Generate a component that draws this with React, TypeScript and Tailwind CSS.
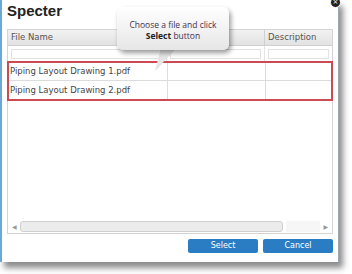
import React from 'react';

const rows = ['Piping Layout Drawing 1.pdf', 'Piping Layout Drawing 2.pdf'];

function Cols({ children, className = '' }: { children: React.ReactNode[]; className?: string }) {
  return (
    <div className={`grid grid-cols-[159px_98px_1fr] ${className}`}>
      {children}
    </div>
  );
}

export default function App() {
  return (
    <div className="relative w-[352px] h-[274px] bg-white overflow-hidden font-['DejaVu_Sans',sans-serif]">
      {/* Dialog */}
      <div className="w-[339px] h-[262px] bg-white border-l-2 border-[#6aa9d6] border-r border-r-[#9aa7ad] shadow-[4px_6px_6px_rgba(0,0,0,0.45)] flex flex-col px-[5px] pb-[8px]">
        <div className="h-[29px] pt-[2px] text-[15px] font-bold text-[#222] leading-[18px] font-['Liberation_Sans',sans-serif]">Specter</div>

        {/* Table */}
        <div className="h-[205px] border border-[#d4d4d4] flex flex-col text-[8.5px] text-[#444]">
          <Cols className="h-[16px] bg-gradient-to-b from-[#f2f2f2] to-[#e2e2e2] border-b border-[#d0d0d0] items-center text-[#555]">
            <div className="pl-[3px] border-r border-[#d0d0d0] h-full flex items-center">File Name</div>
            <div className="pl-[3px] border-r border-[#d0d0d0] h-full flex items-center">Purpose</div>
            <div className="pl-[3px] h-full flex items-center">Description</div>
          </Cols>
          <Cols className="h-[15px] items-center">
            <div className="px-[3px] h-full border-r border-[#e4e4e4] flex items-center"><div className="h-[10px] w-full border border-[#e2e2e2]" /></div>
            <div className="px-[3px] h-full border-r border-[#e4e4e4] flex items-center"><div className="h-[10px] w-full border border-[#e2e2e2]" /></div>
            <div className="px-[3px] h-full flex items-center"><div className="h-[10px] w-full border border-[#e2e2e2]" /></div>
          </Cols>
          <div className="border-2 border-[#cc4a52] -mx-px">
            {rows.map((r, i) => (
              <Cols key={r} className={`h-[18px] items-center ${i === 0 ? 'border-b border-[#dcdcdc]' : ''}`}>
                <div className="pl-[1px] h-full border-r border-[#dcdcdc] flex items-center whitespace-nowrap">{r}</div>
                <div className="h-full border-r border-[#dcdcdc]" />
                <div className="h-full" />
              </Cols>
            ))}
          </div>
          <div className="flex-1" />
          <div className="h-[12px] mb-[1px] flex items-center px-[4px] gap-[3px] text-[#999]">
            <span className="text-[6px]">◀</span>
            <div className="w-[263px] h-[11px] rounded-[3px] border border-[#cfcfcf] bg-[#ececec]" />
            <div className="flex-1 h-[11px] bg-[#f6f6f6]" />
            <span className="text-[6px]">▶</span>
          </div>
        </div>

        {/* Buttons */}
        <div className="mt-[5px] flex justify-end gap-[5px]">
          <button className="w-[70px] h-[14px] rounded-[2px] bg-[#2a7dc2] text-white text-[8px] leading-[14px]">Select</button>
          <button className="w-[70px] h-[14px] rounded-[2px] bg-[#2a7dc2] text-white text-[8px] leading-[14px]">Cancel</button>
        </div>
      </div>

      {/* Close button */}
      <div className="absolute left-[330px] top-[-3px] w-[11px] h-[11px] rounded-full bg-[#222] border border-white flex items-center justify-center text-white text-[7px] leading-none">×</div>

      {/* Callout */}
      <svg className="absolute left-[150px] top-[44px]" width="34" height="30" viewBox="0 0 34 30">
        <polygon points="12,0 30,0 5,27" fill="#e6e6e6" />
        <polygon points="30,0 5,27 8,24" fill="#bdbdbd" />
      </svg>
      <div className="absolute left-[117px] top-[7px] w-[112px] h-[43px] rounded-[6px] bg-gradient-to-b from-white to-[#e6e6e6] shadow-[2px_3px_5px_rgba(0,0,0,0.4)] flex flex-col items-center justify-center pt-[2px] text-[8.5px] leading-[11px] text-[#45304f] font-['Open_Sans',sans-serif]">
        <div>Choose a file and click</div>
        <div><span className="font-bold text-[#222]">Select</span> button</div>
      </div>
    </div>
  );
}
